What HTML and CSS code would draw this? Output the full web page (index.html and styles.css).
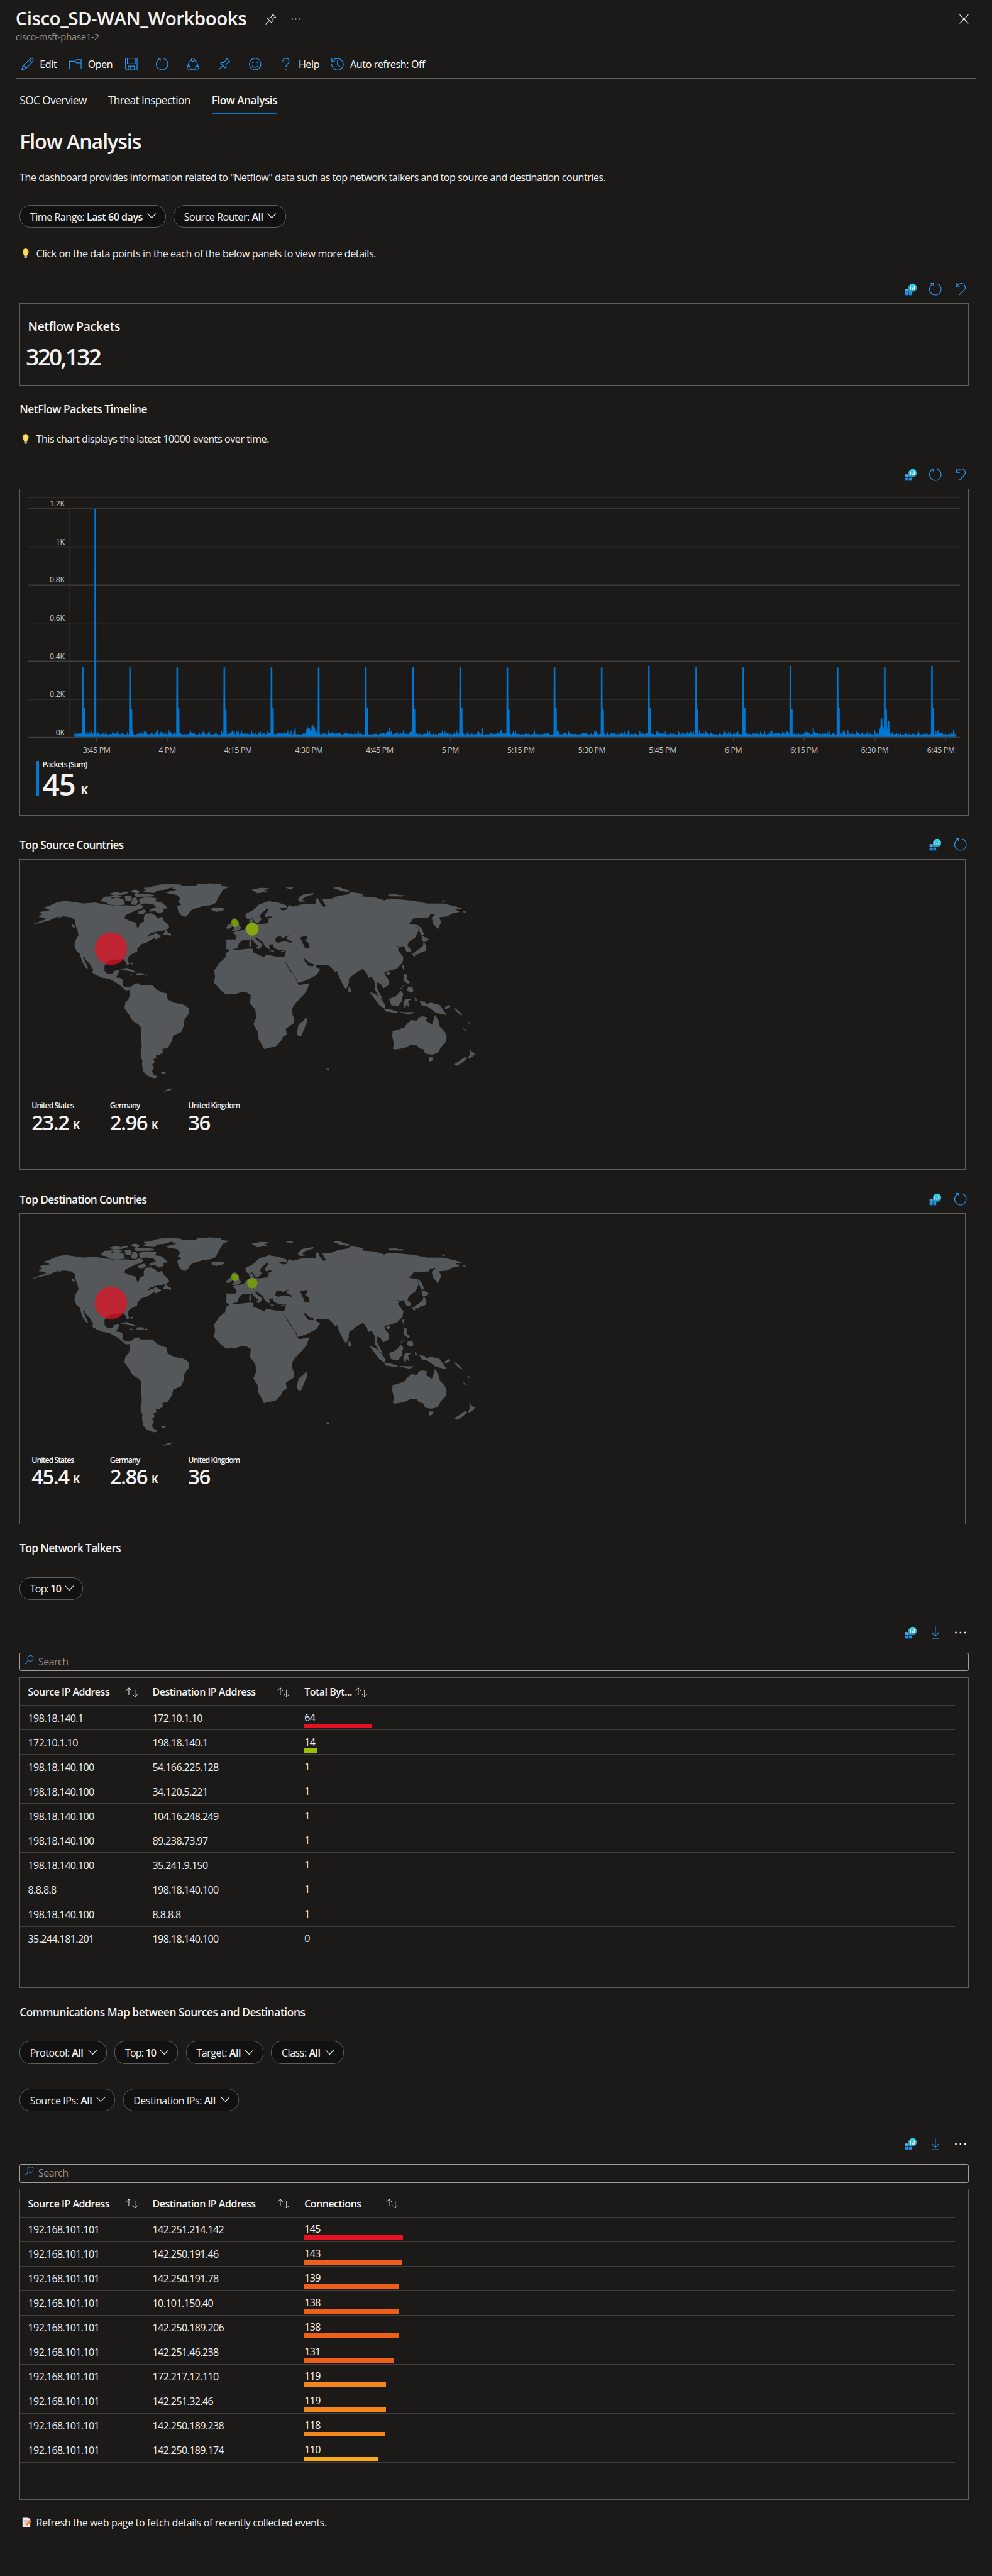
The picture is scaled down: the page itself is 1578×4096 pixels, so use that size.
FILE: index.html
```html
<!DOCTYPE html>
<html lang="en">
<head>
<meta charset="utf-8">
<title>Cisco_SD-WAN_Workbooks</title>
<link rel="stylesheet" href="styles.css">
</head>
<body>
<svg class="sprite" width="0" height="0" aria-hidden="true">
  <defs>
    <linearGradient id="g-tile" x1="0" y1="0" x2="0" y2="1"><stop offset="0" stop-color="#5eb0f5"/><stop offset="1" stop-color="#1482d8"/></linearGradient>
    <linearGradient id="g-bubble" x1="0" y1="0" x2="0" y2="1"><stop offset="0" stop-color="#35dcf5"/><stop offset="1" stop-color="#1593b8"/></linearGradient>
    <linearGradient id="g-bulb" x1="0" y1="0" x2="1" y2="0"><stop offset="0" stop-color="#ffb92e"/><stop offset=".5" stop-color="#fff06a"/><stop offset="1" stop-color="#f9a825"/></linearGradient>
  </defs>
  <symbol id="i-workbook" viewBox="0 0 24 24">
    <path d="M.8 11.2H7v5.6H.8zM.8 18H7v5.6H.8zM8 18h5.6v5.6H8z" fill="url(#g-tile)"/>
    <path d="M7.5 17V8.5A8 8 0 1 1 15.500 17z" fill="url(#g-bubble)"/>
    <path d="M10.300 7h2v6.200h-2zM14 9.500h2v3.700h-2zM17.700 5.500h2v7.700h-2z" fill="#fff"/>
  </symbol>
  <symbol id="i-refresh" viewBox="0 0 24 24"><path d="M15.300 1.300A11.200 11.200 0 1 1 7.500 1.700M3 .8h5.300v5"/></symbol>
  <symbol id="i-undo" viewBox="0 0 24 24"><path d="M3.700 0v7.500H11M4 7C7 2 11 .5 14.500 .8c4.500.4 6.800 4 6.800 7.400 0 2.500-1 4-2.500 5.500L9 23.400"/></symbol>
  <symbol id="i-download" viewBox="0 0 24 24"><path d="M12 0v18M5 11.700l7 7 7-7M5 23.300h14"/></symbol>
  <symbol id="i-dots" viewBox="0 0 24 24"><path d="M1.500 10.600h3v3h-3zM10.500 10.600h3v3h-3zM19.500 10.600h3v3h-3z"/></symbol>
  <symbol id="i-pin" viewBox="0 0 24 24"><path d="M16.300 1l6.700 6.700-1.800 1-1.500-.4-4.800 5 .4 4.200-1.800 1.700-8.700-8.700 1.800-1.700 4.200.4 5-4.800-.4-1.500zM9 15L1 23"/></symbol>
  <symbol id="i-chev" viewBox="0 0 18 10"><path d="M.8.8L9 9 17.200.8"/></symbol>
  <symbol id="i-sort" viewBox="0 0 24 19"><path d="M6 14.500V1M1 6l5-5 5 5M18 4.500v13.700M13 13.200l5 5 5-5"/></symbol>
  <symbol id="i-search" viewBox="0 0 18 18"><circle cx="11.500" cy="6" r="5.400"/><path d="M7.500 10L.6 17.400"/></symbol>
  <symbol id="i-bulb" viewBox="0 0 14 20">
    <path d="M7 .3a6 6 0 0 1 6 6c0 3-2.300 4.600-3 8H4c-.7-3.400-3-5-3-8a6 6 0 0 1 6-6z" fill="url(#g-bulb)"/>
    <path d="M4.200 14.300h5.600v3.200L8.500 19.500h-3l-1.300-2z" fill="#9aa0a6"/>
  </symbol>
  <symbol id="i-memo" viewBox="0 0 20 20">
    <path d="M1 .5h11l4 4.500v14.500H1z" fill="#eee9f5"/><path d="M12 .5V5h4z" fill="#b9aed0"/>
    <path d="M3.500 7h9M3.500 9.500h9M3.500 12h6" stroke="#b4a9c9" stroke-width="1"/>
    <path d="M6 18l1-4 7-7.500 3.500 3L10 17z" fill="#ff822d"/><path d="M14 6.500l1.500-1.500 3.500 3-1.500 1.500z" fill="#f8312f"/><path d="M6 18l1-4 3 3z" fill="#ffce7c"/>
  </symbol>
  <g id="world">
    <path d="M105 434L130 420 148 411 140 405 123 400 135 388 126 380 158 372 152 364 138 361 160 350 180 337 205 330 235 336 265 342 300 338 330 346 365 352 400 350 425 353 440 345 453 352 447 364 428 372 412 382 396 394 393 408 410 420 430 428 433 450 440 446 442 432 456 422 455 405 460 387 478 386 490 395 500 410 512 400 518 420 533 438 534 450 520 460 495 466 475 474 464 490 486 480 492 473 500 480 510 487 494 500 486 495 465 514 447 522 434 540 433 555 415 567 404 580 403 592 408 610 403 617 397 600 390 588 372 590 355 591 338 602 330 620 330 642 340 657 356 656 361 643 376 640 374 652 366 672 385 676 388 690 386 706 398 716 410 717 410 726 398 728 388 716 375 700 360 688 345 676 325 672 305 660 293 650 295 635 285 612 271 590 268 578 262 580 270 605 278 630 272 628 262 605 257 585 253 565 242 552 236 528 240 505 249 482 246 462 240 440 238 415 225 402 200 398 185 404 190 396 170 406 158 415 130 425z"/>
    <path d="M410 718L425 702 438 697 442 707 460 708 482 707 495 725 512 738 526 743 530 770 550 785 580 793 597 808 598 830 583 858 580 890 572 915 547 930 543 955 530 985 512 990 515 1005 505 1015 492 1018 494 1030 484 1035 489 1050 480 1060 486 1075 480 1090 485 1105 499 1115 487 1120 465 1108 453 1090 450 1060 451 1040 447 1030 445 1010 449 980 447 940 447 895 438 880 420 865 410 840 394 808 397 785 408 765 412 740z"/>
    <path d="M525 292L560 280 545 272 580 262 618 264 625 256 665 252 700 256 696 264 724 267 705 278 698 295 688 318 682 338 668 347 640 352 612 365 600 375 595 390 587 400 575 396 565 378 561 355 576 345 563 335 571 320 560 302 540 298z"/>
    <path d="M453 290L462 280 455 272 485 269 482 263 510 257 540 255 573 258 568 265 540 270 520 279 498 282 488 293 470 292zM318 330L330 312 355 310 350 320 375 317 390 325 395 345 370 350 345 345 335 334zM346 298l22-8 14 6 18-8 4 6-20 8-22 3zM440 322l20-8 34 4-4 14 20 4 10 12 10 14-14 2 1 14-14 6-16-12-14 6 4-12 18-6-8-14-22-6-22 2zM395 310l16-4 6 12-4 12-16-4zM420 318l10-3 6 20-8 12-14-3zM425 301l28-3 34 6-5 5-52 2zM415 288l16-6 11 6-8 9zM438 376l18-7 6 8-10 11-14-2zM515 480l10-20 5 10 10 6 0 8-16-4zM352 308l20-2 14 6-20 4zM418 282l14-2 2 5-14 1zM228 436l6 2 2 10-6-2z"/>
    <path d="M668 365L680 360 706 360 707 370 685 377 672 374zM797 280L825 272 850 274 835 282 825 293 812 294zM905 271h22l-8 6zM832 288l10-2 0 5zM942 322L955 304 990 295 992 299 966 311 953 323 965 331 948 333zM1055 272l14-5 20 11 18 6-9 4-25-7zM1228 302l25-2 4 4 20 1-5 4-42-1zM1394 330l12-3 0 6zM1463 375l10 4-6 2z"/>
    <path d="M735 410L746 408 748 425 757 440 762 450 756 460 734 463 742 451 737 443 740 430 732 422zM716 450L720 438 730 431 734 442 730 450 718 454zM789 510l5-1 0 21-5 2zM788 500l5-2 0 9zM854 552h12v4zM888 555l12-4-3 6z"/>
    <path d="M716 502L747 502 749 485 737 470 752 466 772 458 780 442 792 432 787 418 797 412 804 433 820 435 842 431 850 425 850 409 866 400 852 398 841 402 838 390 851 368 842 366 825 386 822 400 827 412 816 428 806 425 800 405 788 412 778 405 777 388 800 372 820 346 850 332 880 338 908 352 905 361 880 360 892 373 906 370 914 348 925 356 960 344 1000 346 998 325 1005 318 1012 340 1025 360 1030 350 1020 324 1045 322 1070 308 1098 302 1110 292 1148 299 1143 310 1190 316 1215 328 1230 320 1265 324 1310 330 1350 342 1400 342 1440 355 1460 364 1438 367 1452 378 1430 385 1415 398 1388 402 1394 425 1385 455 1370 430 1366 405 1380 385 1360 390 1355 402 1308 406 1292 432 1318 438 1323 460 1313 492 1292 512 1288 530 1298 545 1297 558 1286 556 1278 530 1264 534 1250 524 1262 540 1257 548 1275 580 1272 605 1255 630 1228 642 1214 645 1217 660 1230 685 1228 705 1213 718 1203 698 1192 692 1190 712 1198 738 1209 765 1200 762 1186 725 1185 690 1176 668 1165 672 1160 650 1147 632 1130 645 1103 675 1102 700 1094 723 1085 705 1072 665 1066 642 1058 645 1048 625 1038 616 1000 615 980 606 961 584 963 600 975 620 990 622 996 608 1000 626 1012 635 1000 660 970 682 943 695 938 678 920 640 901 598 896 585 903 570 905 547 885 549 868 540 863 522 850 524 853 545 840 535 832 514 812 492 804 493 814 508 830 525 820 543 808 540 818 530 804 514 795 497 785 503 765 505 755 520 750 540 735 545 728 550 716 543 717 520z"/>
    <path d="M728 550L745 550 790 543 800 545 798 558 835 582 842 570 870 578 895 580 900 600 915 640 930 665 940 695 945 707 977 698 970 730 955 755 935 785 922 810 925 840 930 855 929 875 915 888 903 900 906 925 893 937 888 955 870 980 850 984 835 990 828 970 818 945 815 910 802 880 811 850 808 815 791 785 794 750 780 737 762 736 745 744 715 746 700 730 677 695 681 668 678 640 695 605 712 585 716 562z"/>
    <path d="M968 850L971 868 960 905 953 930 945 934 939 920 945 880 958 868zM1103 713l7 12-1 13-7-2zM1334 486l21 14-8 12-12-2zM1340 512L1348 535 1345 552 1330 560 1320 568 1308 563 1325 546 1338 530zM1304 564l10 5-4 11zM1320 437L1332 452 1340 478 1333 484 1325 460zM1272 620l6-4-2 20zM1221 652l12-7 0 10-6 5zM1278 658l7 0 0 22 11 14-7 4-12-14zM1290 716l13-4 4 20-9 6-10-8zM1266 722l12-16-10 16z"/>
    <path d="M1231 768L1250 757 1268 732 1275 745 1270 762 1272 772 1260 797 1238 795zM1170 738L1186 745 1205 768 1218 795 1216 809 1200 795 1184 764zM1215 812L1235 815 1257 824 1255 829 1220 822zM1278 776l6-8 18-1-12 9 3 28-8-14-4 18-5-14zM1264 826l22 1 24 0-16 9zM1313 762l4 6 0 10-4-4zM1327 778L1342 780 1348 792 1362 784 1390 795 1403 820 1412 838 1395 833 1378 828 1366 815 1350 798 1334 795zM1404 808l16-14 4 6-12 11zM1435 808l12 10 14 18-2 4-14-16zM1480 866l4 12-2-2zM1465 898l11 12-2 3z"/>
    <path d="M1242 912L1280 895 1287 878 1302 862 1318 866 1325 850 1335 845 1350 850 1346 865 1366 883 1372 860 1376 840 1386 865 1390 890 1405 912 1412 935 1408 960 1395 980 1383 1008 1365 1015 1345 1010 1338 990 1326 987 1318 972 1300 970 1280 985 1250 992 1242 988 1247 970 1241 935zM1356 1028h14l-4 14-8 3zM1485 990L1491 1005 1503 1010 1490 1028 1480 1031 1486 1016zM1470 1027L1477 1032 1460 1052 1445 1064 1436 1060 1455 1042zM384 636L400 629 425 643 430 648 405 641zM430 654l18-2 8 8-22 2zM410 659h8v3h-8zM459 659h7v3h-7zM412 608l8-2-3 8zM510 1095l14-3-2 7-10 0zM518 1180L530 1171 543 1167 540 1173zM1032 1077h8v6l-6 1z"/>
    <path class="lake" d="M870 512L872 492 885 486 895 494 914 481 906 498 926 512 920 517 900 510 880 517zM948 492L970 484 972 500 964 504 978 520 980 542 964 542 957 518z"/>
  </g>
</svg>

<header class="blade">
  <div class="blade-title">
    <h1>Cisco_SD-WAN_Workbooks</h1>
    <svg class="ico white title-pin"><use href="#i-pin"/></svg>
    <svg class="ico dots title-dots"><use href="#i-dots"/></svg>
    <svg class="ico white close" viewBox="0 0 18 18"><path d="M.5.5l17 17M17.500.5l-17 17"/></svg>
  </div>
  <p class="subtitle">cisco-msft-phase1-2</p>
  <nav class="toolbar">
    <a><svg class="ico" viewBox="0 0 24 24"><path d="M1 23l2-7.500L17.500 1.800Q20 0 22 2t.3 4.500L8.500 21zM3 15.500q4.500.5 5.500 5.500M15.500 3.800l5 5"/></svg><span>Edit</span></a>
    <a><svg class="ico" viewBox="0 0 24 24"><path d="M.8 6.500h10.500l2.700-3h9.200v17.800H.8zM11.300 6.500l2.700 3h9"/></svg><span>Open</span></a>
    <a><svg class="ico" viewBox="0 0 24 24"><path d="M.8.8h22.400v22.400H3.500L.8 20.500zM4.500 1v10.500h15V1M6 23v-7h12v7M9.500 23v-4h2.500"/></svg></a>
    <a><svg class="ico"><use href="#i-refresh"/></svg></a>
    <a><svg class="ico" viewBox="0 0 24 24"><circle cx="12" cy="3.800" r="3"/><circle cx="3.900" cy="18.800" r="3.100"/><circle cx="20.100" cy="18.800" r="3.100"/><path d="M9 4.500Q2.500 8 2.500 15.700M15 4.500q6.500 3.500 6.500 11.200M6.300 21q5.700 4 11.400 0"/></svg></a>
    <a><svg class="ico"><use href="#i-pin"/></svg></a>
    <a><svg class="ico" viewBox="0 0 24 24"><circle cx="12" cy="12" r="11.200"/><path d="M6 15.500q6 5.500 12 0"/><path d="M7.500 8v1.800M16.500 8v1.800" stroke-width="2.400"/></svg></a>
    <a><svg class="ico" viewBox="0 0 24 24"><path d="M6 7q0-6 6-6t6 6c0 4-6 5-6 11M12 21.500V24"/></svg><span>Help</span></a>
    <a><svg class="ico" viewBox="0 0 24 24"><path d="M2.500 6.500A11.200 11.200 0 1 1 .8 12M1 1v6h6M12 4.500V13l5 4"/></svg><span>Auto refresh: Off</span></a>
  </nav>
</header>

<main>
  <nav class="tabs">
    <a class="t1">SOC Overview</a><a class="t2">Threat Inspection</a><a class="t3 active">Flow Analysis</a>
  </nav>
  <h2>Flow Analysis</h2>
  <p class="intro">The dashboard provides information related to "Netflow" data such as top network talkers and top source and destination countries.</p>
  <div class="pills p1">
    <div class="pill w283"><span>Time Range: <b>Last 60 days</b></span><svg class="chev"><use href="#i-chev"/></svg></div>
    <div class="pill w218"><span>Source Router: <b>All</b></span><svg class="chev"><use href="#i-chev"/></svg></div>
  </div>
  <p class="tip tip1"><svg class="bulb"><use href="#i-bulb"/></svg><span>Click on the data points in the each of the below panels to view more details.</span></p>

  <div class="tools tools-top"><svg class="fill"><use href="#i-workbook"/></svg><svg class="ico"><use href="#i-refresh"/></svg><svg class="ico"><use href="#i-undo"/></svg></div>
  <section class="panel stat">
    <h4>Netflow Packets</h4>
    <div class="big">320,132</div>
  </section>

  <h3 class="h-timeline">NetFlow Packets Timeline</h3>
  <p class="tip tip2"><svg class="bulb"><use href="#i-bulb"/></svg><span>This chart displays the latest 10000 events over time.</span></p>
  <div class="tools tools-top"><svg class="fill"><use href="#i-workbook"/></svg><svg class="ico"><use href="#i-refresh"/></svg><svg class="ico"><use href="#i-undo"/></svg></div>
  <section class="panel timeline">
    <svg class="chart" id="chart" viewBox="39 947 1835 520" preserveAspectRatio="none"></svg>
    <div class="legend">
      <div class="legend-label">Packets (Sum)</div>
      <div class="legend-value">45<small>K</small></div>
    </div>
  </section>

  <div class="head-row"><h3>Top Source Countries</h3><div class="tools"><svg class="fill"><use href="#i-workbook"/></svg><svg class="ico"><use href="#i-refresh"/></svg></div></div>
  <section class="panel map">
    <svg class="world" viewBox="63.700 230 1500 970" preserveAspectRatio="none">
      <use href="#world"/>
      <ellipse class="hot" cx="351" cy="543" rx="51" ry="73"/>
      <ellipse class="cool" cx="743" cy="429" rx="12.500" ry="17"/>
      <ellipse class="warm" cx="797.500" cy="455.500" rx="20.500" ry="28.800"/>
    </svg>
    <dl class="figures">
      <div><dt>United States</dt><dd>23.2<small>K</small></dd></div>
      <div><dt>Germany</dt><dd>2.96<small>K</small></dd></div>
      <div><dt>United Kingdom</dt><dd>36</dd></div>
    </dl>
  </section>

  <div class="head-row"><h3>Top Destination Countries</h3><div class="tools"><svg class="fill"><use href="#i-workbook"/></svg><svg class="ico"><use href="#i-refresh"/></svg></div></div>
  <section class="panel map">
    <svg class="world" viewBox="63.700 230 1500 970" preserveAspectRatio="none">
      <use href="#world"/>
      <ellipse class="hot" cx="351" cy="543" rx="51" ry="73"/>
      <ellipse class="cool" cx="743" cy="429" rx="12.500" ry="17"/>
      <ellipse class="cool" cx="797.500" cy="455.500" rx="16.500" ry="23"/>
    </svg>
    <dl class="figures">
      <div><dt>United States</dt><dd>45.4<small>K</small></dd></div>
      <div><dt>Germany</dt><dd>2.86<small>K</small></dd></div>
      <div><dt>United Kingdom</dt><dd>36</dd></div>
    </dl>
  </section>

  <h3 class="h-talkers">Top Network Talkers</h3>
  <div class="pills p2"><div class="pill w123"><span>Top: <b>10</b></span><svg class="chev"><use href="#i-chev"/></svg></div></div>
  <div class="tools tools-table"><svg class="fill"><use href="#i-workbook"/></svg><svg class="ico"><use href="#i-download"/></svg><svg class="ico dots"><use href="#i-dots"/></svg></div>
  <div class="search"><svg class="ico"><use href="#i-search"/></svg><span>Search</span></div>
  <section class="panel grid">
    <div class="row head"><div><span>Source IP Address</span><svg class="sort"><use href="#i-sort"/></svg></div><div><span>Destination IP Address</span><svg class="sort"><use href="#i-sort"/></svg></div><div class="w122"><span>Total Byt...</span><svg class="sort"><use href="#i-sort"/></svg></div></div>
    <div class="row"><div>198.18.140.1</div><div>172.10.1.10</div><div class="val">64<i class="bar c1" style="width:13.1rem"></i></div></div>
    <div class="row"><div>172.10.1.10</div><div>198.18.140.1</div><div class="val">14<i class="bar c5" style="width:2.6rem"></i></div></div>
    <div class="row"><div>198.18.140.100</div><div>54.166.225.128</div><div class="val">1<i class="bar"></i></div></div>
    <div class="row"><div>198.18.140.100</div><div>34.120.5.221</div><div class="val">1<i class="bar"></i></div></div>
    <div class="row"><div>198.18.140.100</div><div>104.16.248.249</div><div class="val">1<i class="bar"></i></div></div>
    <div class="row"><div>198.18.140.100</div><div>89.238.73.97</div><div class="val">1<i class="bar"></i></div></div>
    <div class="row"><div>198.18.140.100</div><div>35.241.9.150</div><div class="val">1<i class="bar"></i></div></div>
    <div class="row"><div>8.8.8.8</div><div>198.18.140.100</div><div class="val">1<i class="bar"></i></div></div>
    <div class="row"><div>198.18.140.100</div><div>8.8.8.8</div><div class="val">1<i class="bar"></i></div></div>
    <div class="row"><div>35.244.181.201</div><div>198.18.140.100</div><div class="val">0<i class="bar"></i></div></div>
  </section>

  <h3 class="h-comm">Communications Map between Sources and Destinations</h3>
  <div class="pills p2">
    <div class="pill w169"><span>Protocol: <b>All</b></span><svg class="chev"><use href="#i-chev"/></svg></div>
    <div class="pill w123"><span>Top: <b>10</b></span><svg class="chev"><use href="#i-chev"/></svg></div>
    <div class="pill w150"><span>Target: <b>All</b></span><svg class="chev"><use href="#i-chev"/></svg></div>
    <div class="pill w141"><span>Class: <b>All</b></span><svg class="chev"><use href="#i-chev"/></svg></div>
  </div>
  <div class="pills p3">
    <div class="pill w185"><span>Source IPs: <b>All</b></span><svg class="chev"><use href="#i-chev"/></svg></div>
    <div class="pill w225"><span>Destination IPs: <b>All</b></span><svg class="chev"><use href="#i-chev"/></svg></div>
  </div>
  <div class="tools tools-table"><svg class="fill"><use href="#i-workbook"/></svg><svg class="ico"><use href="#i-download"/></svg><svg class="ico dots"><use href="#i-dots"/></svg></div>
  <div class="search"><svg class="ico"><use href="#i-search"/></svg><span>Search</span></div>
  <section class="panel grid">
    <div class="row head"><div><span>Source IP Address</span><svg class="sort"><use href="#i-sort"/></svg></div><div><span>Destination IP Address</span><svg class="sort"><use href="#i-sort"/></svg></div><div class="w182"><span>Connections</span><svg class="sort"><use href="#i-sort"/></svg></div></div>
    <div class="row"><div>192.168.101.101</div><div>142.251.214.142</div><div class="val">145<i class="bar c1" style="width:19.1rem"></i></div></div>
    <div class="row"><div>192.168.101.101</div><div>142.250.191.46</div><div class="val">143<i class="bar c2" style="width:18.9rem"></i></div></div>
    <div class="row"><div>192.168.101.101</div><div>142.250.191.78</div><div class="val">139<i class="bar c2" style="width:18.3rem"></i></div></div>
    <div class="row"><div>192.168.101.101</div><div>10.101.150.40</div><div class="val">138<i class="bar c2" style="width:18.3rem"></i></div></div>
    <div class="row"><div>192.168.101.101</div><div>142.250.189.206</div><div class="val">138<i class="bar c2" style="width:18.3rem"></i></div></div>
    <div class="row"><div>192.168.101.101</div><div>142.251.46.238</div><div class="val">131<i class="bar c2" style="width:17.3rem"></i></div></div>
    <div class="row"><div>192.168.101.101</div><div>172.217.12.110</div><div class="val">119<i class="bar c3" style="width:15.8rem"></i></div></div>
    <div class="row"><div>192.168.101.101</div><div>142.251.32.46</div><div class="val">119<i class="bar c3" style="width:15.8rem"></i></div></div>
    <div class="row"><div>192.168.101.101</div><div>142.250.189.238</div><div class="val">118<i class="bar c3" style="width:15.6rem"></i></div></div>
    <div class="row"><div>192.168.101.101</div><div>142.250.189.174</div><div class="val">110<i class="bar c4" style="width:14.4rem"></i></div></div>
  </section>
  <p class="tip tip3"><svg class="memo"><use href="#i-memo"/></svg><span>Refresh the web page to fetch details of recently collected events.</span></p>
</main>
<script src="script.js"></script>
</body>
</html>
```
FILE: styles.css
```css
/* 1rem = 10 design units */
html { font-size: 8.217px; background: #1b1a19; }
* { box-sizing: border-box; margin: 0; padding: 0; }
body {
  width: 192rem; height: 4096px; overflow: hidden;
  background: #1b1a19; color: #f3f2f1;
  font-family: "Segoe UI", "Open Sans", "Noto Sans", sans-serif;
  font-size: 1.95rem; line-height: 3rem; letter-spacing: -0.042rem;
}
h1, h2, h3, h4, b { font-weight: 600; }
svg { display: block; flex: none; overflow: visible; }
.sprite { position: absolute; }
.ico { width: 2.4rem; height: 2.4rem; fill: none; stroke: #2899f5; stroke-width: 1.5; }
.fill { width: 2.4rem; height: 2.4rem; }
.white { stroke: #f3f2f1; }
.ico.dots { fill: #f3f2f1; stroke: none; }

/* blade header */
.blade { margin: 0 3rem; padding-top: .9rem; height: 15.2rem; border-bottom: .15rem solid #605e5c; }
.blade-title { display: flex; align-items: center; height: 5.24rem; }
h1 { font-size: 3.6rem; line-height: 5rem; width: 48.4rem; white-space: nowrap; letter-spacing: -.064rem; }
.title-pin { width: 2.1rem; height: 2.1rem; margin-top: .4rem; }
.title-dots { width: 1.8rem; height: 1.8rem; margin: .3rem 0 0 2.9rem; }
.close { width: 1.8rem; height: 1.8rem; margin: .3rem 1.5rem 0 auto; stroke-width: 1.4; }
.subtitle { margin: .08rem 0 -.08rem; font-size: 1.8rem; line-height: 1.92rem; color: #979593; letter-spacing: -.029rem; }
.toolbar { display: grid; grid-template-columns: 9.3rem 10.8rem repeat(5, 6rem) 10rem auto; margin: 1.64rem 0 0 1.1rem; height: 5.4rem; align-items: center; }
.toolbar a { display: flex; align-items: center; gap: 1.2rem; white-space: nowrap; color: #fff; }
.toolbar span { padding-top: .15rem; }

main { padding: 0 4.5rem 0 3.8rem; }
main p, main h2, main h3 { white-space: nowrap; }
.tabs { display: flex; gap: 4.15rem; margin-top: 2rem; font-size: 2.1rem; line-height: 4.7rem; height: 4.9rem; letter-spacing: -.065rem; }
.tabs .t2 { letter-spacing: -.07rem; }
.tabs .active { font-weight: 600; border-bottom: .3rem solid #0078d4; }
h2 { font-size: 3.9rem; line-height: 5.2rem; margin: 2.75rem 0 -.1rem; letter-spacing: -.124rem; }
.intro { margin: 2.88rem 0 -.09rem; letter-spacing: -.052rem; }

.pills { display: flex; gap: 1.5rem; letter-spacing: -.055rem; }
.p1 { margin-top: 3.96rem; }
.p2 { margin-top: 4.1rem; }
.p3 { margin-top: 4.8rem; }
.pill { display: flex; align-items: center; justify-content: space-between; height: 4.4rem; padding: 0 1.7rem 0 1.9rem; border: .12rem solid #605e5c; border-radius: 2.1rem; background: #111; white-space: nowrap; }
.pill span { padding-top: .2rem; }
.chev { width: 1.8rem; height: 1rem; fill: none; stroke: #f3f2f1; stroke-width: 1.4; margin-top: -.2rem; }
.w283 { width: 28.3rem; } .w218 { width: 21.8rem; } .w123 { width: 12.3rem; letter-spacing: -.1rem; }
.w169 { width: 16.9rem; } .w150 { width: 15rem; } .w141 { width: 14.1rem; }
.w185 { width: 18.5rem; } .w225 { width: 22.5rem; }

.tip { display: flex; align-items: center; height: 3rem; letter-spacing: -.046rem; }
.tip span { padding-top: .2rem; }
.bulb { width: 1.4rem; height: 2rem; margin: 0 1.3rem 0 .5rem; }
.memo { width: 2rem; height: 2rem; margin: 0 .8rem 0 .4rem; }
.tip1 { margin-top: 3.44rem; }
.tip2 { margin-top: 2.78rem; letter-spacing: -.052rem; }
.tip3 { margin-top: 2.85rem; }

.tools { display: flex; justify-content: flex-end; gap: 2.4rem; height: 2.4rem; }
.tools-top { margin-top: 4.26rem; padding-right: .4rem; }
.tools-table { margin-top: 5.1rem; padding-right: .4rem; }

.panel { border: .13rem solid #605e5c; margin-top: 1.5rem; }
.stat { height: 15.9rem; padding: 2.94rem 0 0 1.5rem; }
.stat h4 { font-size: 2.4rem; line-height: 3rem; letter-spacing: -.062rem; }
.big { margin: 1.68rem 0 0 -.4rem; font-size: 4.5rem; line-height: 5rem; font-weight: 600; letter-spacing: -.33rem; }

h3 { font-size: 2.1rem; line-height: 3rem; letter-spacing: -.054rem; }
.h-timeline { margin: 3.18rem 0 -.12rem; }
.h-talkers { margin: 3.22rem 0 -.12rem; letter-spacing: -.074rem; }
.h-comm { margin: 3.27rem 0 -.12rem; letter-spacing: -.049rem; }

/* timeline chart */
.timeline { height: 63.2rem; }
.chart { width: 183.5rem; height: 52rem; font-size: 15px; letter-spacing: -.4px; }
.chart text { fill: #c8c6c4; }
.chart .rule { stroke: #403f3e; stroke-width: 1.6; fill: none; }
.chart .series { fill: #0078d4; stroke: #0078d4; stroke-width: .6; }
.legend { margin: .5rem 0 0 3rem; height: 6.8rem; border-left: .7rem solid #0078d4; padding-left: .7rem; font-weight: 600; }
.legend-label { font-size: 1.5rem; line-height: 1.44rem; letter-spacing: -.117rem; }
.legend-value { font-size: 5.8rem; line-height: 6.32rem; letter-spacing: -.16rem; }
.legend-value small { font-size: 2.1rem; margin-left: 1.1rem; vertical-align: .15em; line-height: 1; font-weight: 700; }

/* maps */
.head-row { display: flex; align-items: center; justify-content: space-between; width: 183.3rem; height: 2.4rem; margin-top: 4.5rem; }
.head-row h3 { padding-top: .24rem; letter-spacing: -.075rem; }
.map { width: 183.1rem; height: 60.2rem; padding-top: 3.67rem; }
.world { width: 91.84rem; height: 42.07rem; fill: #55585b; stroke: #74777a; stroke-width: .8; stroke-linejoin: round; }
.world .hot, .world .cool, .world .warm { stroke: none; }
.lake { fill: #1b1a19; }
.hot { fill: #e81123; fill-opacity: .72; }
.cool { fill: #7ba900; fill-opacity: .8; }
.warm { fill: #93b800; fill-opacity: .8; }
.figures { display: grid; grid-template-columns: repeat(3, 15.15rem); margin: .97rem 0 0 2.2rem; font-weight: 600; white-space: nowrap; }
.figures dt { font-size: 1.5rem; line-height: 2rem; letter-spacing: -.122rem; }
.figures dd { font-size: 4rem; line-height: 4.48rem; letter-spacing: -.19rem; }
.figures small { font-size: 1.9rem; margin-left: .85rem; vertical-align: .13em; line-height: 1; font-weight: 700; }

/* search and tables */
.search { display: flex; align-items: center; gap: .9rem; height: 3.6rem; margin-top: 2.7rem; padding-left: .8rem; border: .15rem solid #a19f9d; border-radius: .3rem; color: #979593; }
.search .ico { width: 1.8rem; height: 1.8rem; margin-top: -.8rem; stroke-width: 1.3; }
.search span { letter-spacing: -.065rem; }
.grid { height: 60.15rem; margin-top: 1.2rem; }
.row { display: grid; grid-template-columns: 24.1rem 29.4rem 1fr; width: 181rem; height: 4.75rem; padding: .2rem 0 0 1.5rem; border-bottom: .13rem solid #403f3e; align-items: center; letter-spacing: -.072rem; }
.head { height: 5.4rem; font-weight: 600; letter-spacing: -.061rem; }
.head div { display: flex; align-items: center; justify-content: space-between; padding-right: 2.8rem; white-space: nowrap; }
.head .w122 { width: 12.2rem; padding: 0; }
.head .w182 { width: 18.2rem; padding: 0; }
.sort { width: 2.4rem; height: 1.9rem; fill: none; stroke: #f3f2f1; stroke-width: 1.2; }
.val { display: flex; flex-direction: column; justify-content: flex-end; height: 100%; padding-bottom: .25rem; line-height: 2.1rem; }
.bar { display: block; height: .9rem; margin-top: .1rem; }
.c1 { background: #e81123; } .c2 { background: #ef5f1c; } .c3 { background: #f5861c; } .c4 { background: #f9ab17; } .c5 { background: #98c006; }
```
FILE: script.js
```js
// Netflow packets timeline
(function () {
  var base = 1427, out = '';
  function line(x1, y1, x2, y2) {
    out += '<path class="rule" d="M' + x1 + ' ' + y1 + 'L' + x2 + ' ' + y2 + '"/>';
  }
  function text(x, y, anchor, s) {
    out += '<text x="' + x + '" y="' + y + '" text-anchor="' + anchor + '">' + s + '</text>';
  }
  line(54, 962.5, 1859, 962.5);
  ['1.2K', '1K', '0.8K', '0.6K', '0.4K', '0.2K', '0K'].forEach(function (s, i) {
    var y = 984.6 + i * 73.73;
    line(54, y, 1859, y);
    text(125, y - 4.4, 'end', s);
  });
  line(133.5, 984.6, 133.5, base);
  ['3:45 PM', '4 PM', '4:15 PM', '4:30 PM', '4:45 PM', '5 PM', '5:15 PM', '5:30 PM', '5:45 PM', '6 PM', '6:15 PM', '6:30 PM', '6:45 PM'].forEach(function (s, i) {
    var x = 187 + i * 136.98;
    line(x, base, x, base + 7);
    text(i === 12 ? 1821.5 : x, 1457, 'middle', s);
  });

  // background traffic
  var seed = 7;
  function rnd() { seed = (seed * 16807) % 2147483647; return seed / 2147483647; }
  var d = 'M144 ' + (base - 2);
  for (var x = 144; x < 1850; x += 1.3) {
    var r = rnd(), h = 4 + r * 5 + (r > .88 ? rnd() * 6 : 0);
    if (x > 593 && x < 612) h = 9 + rnd() * 13;
    if (x > 1703 && x < 1722) h = 12 + rnd() * 10;
    d += 'L' + x.toFixed(1) + ' ' + (base - h).toFixed(1);
  }
  d += 'L1850 ' + (base - 1) + 'L144 ' + (base - 1) + 'Z';

  // periodic bursts
  function spike(x, top, w) {
    d += 'M' + (x - w) + ' ' + (base - 2) + 'L' + (x - w * .75) + ' ' + top + 'H' + (x + w * .75) + 'L' + (x + w) + ' ' + (base - 2) + 'Z';
  }
  for (var i = 0; i < 19; i++) {
    var c = 160.4 + i * 91.32;
    spike(c, (i === 12 || i === 15 || i === 18) ? 1289 : 1292, 1.6);
    if (i !== 5) spike(c + 2.8, i % 2 ? 1373 : 1370, 1.5);
  }
  spike(184.4, 984.6, 1.6);
  spike(605, 1404, 2);
  spike(597, 1410, 2);
  spike(1706.5, 1391, 1.8);
  spike(1720, 1395, 1.8);
  spike(1574.5, 1408, 1);
  spike(754.5, 1409, 1.2);
  spike(571.5, 1410, 1);
  spike(934, 1409, 1.2);
  out += '<path class="series" d="' + d + '"/>';
  document.getElementById('chart').innerHTML = out;
})();
```
